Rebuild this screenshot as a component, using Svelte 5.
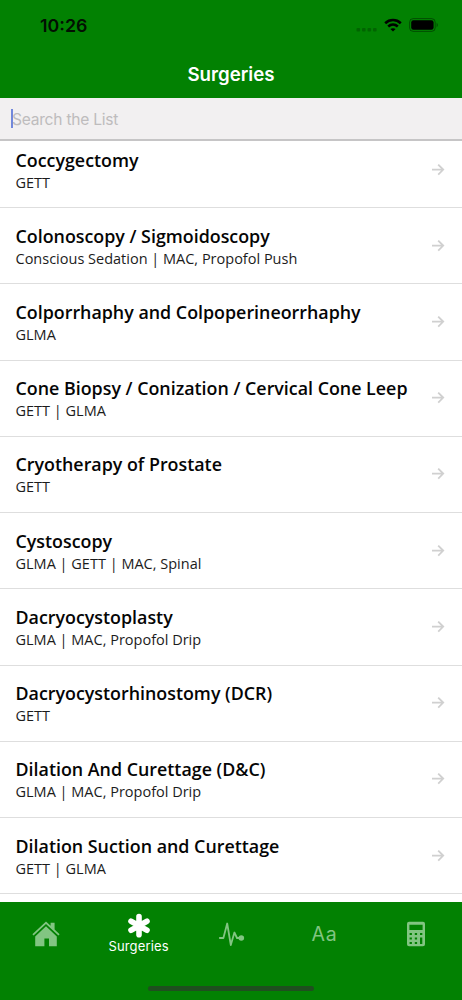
<script lang="ts">
  interface Surgery {
    name: string;
    anesthesia: string;
  }

  let surgeries: Surgery[] = [
    { name: 'Coccygectomy', anesthesia: 'GETT' },
    { name: 'Colonoscopy / Sigmoidoscopy', anesthesia: 'Conscious Sedation | MAC, Propofol Push' },
    { name: 'Colporrhaphy and Colpoperineorrhaphy', anesthesia: 'GLMA' },
    { name: 'Cone Biopsy / Conization / Cervical Cone Leep', anesthesia: 'GETT | GLMA' },
    { name: 'Cryotherapy of Prostate', anesthesia: 'GETT' },
    { name: 'Cystoscopy', anesthesia: 'GLMA | GETT | MAC, Spinal' },
    { name: 'Dacryocystoplasty', anesthesia: 'GLMA | MAC, Propofol Drip' },
    { name: 'Dacryocystorhinostomy (DCR)', anesthesia: 'GETT' },
    { name: 'Dilation And Curettage (D&C)', anesthesia: 'GLMA | MAC, Propofol Drip' },
    { name: 'Dilation Suction and Curettage', anesthesia: 'GETT | GLMA' }
  ];
</script>

<div class="screen">
  <header>
    <div class="status-bar">
      <span class="time">10:26</span>
      <div class="status-icons">
        <svg class="signal" width="22" height="4" viewBox="0 0 22 4">
          <rect x="0.5" y="0" width="3.6" height="3.4" rx="1" />
          <rect x="6" y="0" width="3.6" height="3.4" rx="1" />
          <rect x="11.5" y="0" width="3.6" height="3.4" rx="1" />
          <rect x="17" y="0" width="3.6" height="3.4" rx="1" />
        </svg>
        <svg class="wifi" width="18" height="14" viewBox="0 0 18 14">
          <path d="M1.2 5.2C5.7 1 12.3 1 16.8 5.2" />
          <path d="M4.2 8.5C7 6 11 6 13.8 8.5" />
          <path class="fill" d="M9 13.6L6.4 11.1C7.9 9.8 10.1 9.8 11.6 11.1Z" />
        </svg>
        <svg class="battery" width="30" height="14" viewBox="0 0 30 14">
          <rect class="shell" x="0.6" y="0.6" width="25.6" height="12.8" rx="3.6" />
          <rect x="2.2" y="2.2" width="22.4" height="9.6" rx="2.2" />
          <path class="tip" d="M27.6 4.8C29.3 5.5 29.3 8.5 27.6 9.2Z" />
        </svg>
      </div>
    </div>
    <h1>Surgeries</h1>
  </header>

  <div class="search">
    <span class="caret"></span>
    <span class="placeholder">Search the List</span>
  </div>

  <main>
    <ul>
      {#each surgeries as surgery}
        <li>
          <div class="info">
            <div class="name">{surgery.name}</div>
            <div class="anesthesia">{surgery.anesthesia}</div>
          </div>
          <svg class="arrow" width="14" height="12" viewBox="0 0 14 12">
            <path d="M1 5.6H12.2M7.2 0.6L12.2 5.6L7.2 10.6" />
          </svg>
        </li>
      {/each}
    </ul>
  </main>

  <nav>
    <button class="tab" aria-label="Home">
      <svg width="28" height="26" viewBox="0 0 28 26">
        <path d="M14 5.2L24.8 15.4V25.2H17V17.4H12.4V25.2H3.2V15.4Z" />
        <path d="M0.4 13.2L14 0.6L18.6 4.8V1.8H22.6V8.4L27.6 13.2L26.4 14.4L14 2.9L1.6 14.4Z" />
      </svg>
    </button>
    <button class="tab active">
      <svg width="24" height="26" viewBox="0 0 24 26">
        <path class="asterisk" d="M12 3.6V21.8M4 8.2L20 17.2M20 8.2L4 17.2" />
      </svg>
      <span>Surgeries</span>
    </button>
    <button class="tab" aria-label="Vitals">
      <svg width="28" height="26" viewBox="0 0 28 26">
        <path class="pulse" d="M2.8 17H6.4L10.2 2.5L13.8 24L17.4 11.5L20 17H24.5" />
        <circle cx="24.3" cy="17" r="2.8" />
      </svg>
    </button>
    <button class="tab letters">Aa</button>
    <button class="tab" aria-label="Calculator">
      <svg width="20" height="26" viewBox="0 0 20 26">
        <path
          fill-rule="evenodd"
          d="M3 .8H17Q19 .8 19 2.8V23.2Q19 25.2 17 25.2H3Q1 25.2 1 23.2V2.8Q1 .8 3 .8ZM3.4 3.7V9H16.6V3.7ZM3.6 11.9V14.1H5.9V11.9ZM8.8 11.9V14.1H11.1V11.9ZM14 11.9V14.1H16.3V11.9ZM3.6 16.4V18.6H5.9V16.4ZM8.8 16.4V18.6H11.1V16.4ZM3.6 20.9V23.1H5.9V20.9ZM8.8 20.9V23.1H11.1V20.9ZM14 16.4V23.1H16.3V16.4Z"
        />
      </svg>
    </button>
    <div class="home-indicator"></div>
  </nav>
</div>

<style>
  :global(body) {
    margin: 0;
    background: #fff;
  }

  .screen {
    display: flex;
    flex-direction: column;
    width: 462px;
    height: 1000px;
    overflow: hidden;
    background: #fff;
    font-family: Inter, 'Liberation Sans', sans-serif;
  }

  header {
    height: 98px;
    flex-shrink: 0;
    background: #028102;
  }

  .status-bar {
    display: flex;
    justify-content: space-between;
    align-items: center;
    height: 50px;
    padding: 0 23px 0 40px;
  }

  .time {
    font-size: 17.8px;
    font-weight: 600;
    color: #021002;
  }

  .status-icons {
    display: flex;
    align-items: center;
  }

  .signal {
    margin: 9px 6px 0 0;
    opacity: 0.22;
  }

  .wifi {
    margin-right: 7px;
    fill: none;
    stroke: #000;
    stroke-width: 2.6;
  }

  .wifi .fill {
    fill: #000;
    stroke: none;
  }

  .shell {
    fill: none;
    stroke: #000;
    stroke-opacity: 0.4;
  }

  .tip {
    opacity: 0.4;
  }

  h1 {
    margin: 0;
    font-size: 18.7px;
    line-height: 49px;
    font-weight: 600;
    text-align: center;
    color: #fff;
  }

  .search {
    display: flex;
    align-items: center;
    box-sizing: border-box;
    height: 43px;
    flex-shrink: 0;
    padding-left: 11px;
    background: #f2f0f1;
    border-bottom: 2px solid #c6c5c6;
  }

  .caret {
    width: 2px;
    height: 19px;
    margin-right: -1px;
    background: #7288dc;
  }

  .placeholder {
    font-size: 15.6px;
    letter-spacing: -0.25px;
    padding-top: 1px;
    color: #bebcbd;
  }

  main {
    flex: 1;
    min-height: 0;
    overflow: hidden;
  }

  ul {
    margin: -9px 0 0;
    padding: 0;
    list-style: none;
    font-family: 'Open Sans', sans-serif;
  }

  li {
    display: flex;
    align-items: center;
    justify-content: space-between;
    box-sizing: border-box;
    height: 76.23px;
    padding: 0 17px 0 15.5px;
    border-bottom: 1px solid #dedede;
  }

  .name {
    font-size: 17.85px;
    line-height: 24px;
    font-weight: 600;
    color: #050505;
    white-space: nowrap;
  }

  .anesthesia {
    margin-bottom: -2px;
    font-size: 14.5px;
    line-height: 22px;
    color: #1c1c1c;
    white-space: nowrap;
  }

  .arrow {
    fill: none;
    stroke: #d0d0d0;
    stroke-width: 1.8;
  }

  nav {
    position: relative;
    display: grid;
    grid-template-columns: repeat(5, 1fr);
    align-items: start;
    height: 98px;
    flex-shrink: 0;
    background: #028102;
  }

  .tab {
    display: flex;
    flex-direction: column;
    align-items: center;
    justify-content: center;
    height: 64px;
    padding: 0;
    border: none;
    background: none;
    font-family: inherit;
    color: #82c582;
  }

  .tab svg {
    fill: currentColor;
  }

  .tab.active {
    height: 62px;
    color: #fff;
  }

  .tab span {
    font-size: 13px;
    line-height: 16px;
    letter-spacing: 0.15px;
    margin-top: -1px;
  }

  .asterisk {
    stroke: currentColor;
    stroke-width: 5.6;
    stroke-linecap: round;
  }

  .pulse {
    fill: none;
    stroke: currentColor;
    stroke-width: 1.8;
    stroke-linecap: round;
    stroke-linejoin: round;
  }

  .letters {
    padding-left: 2px;
    font-size: 19.5px;
    letter-spacing: 0.6px;
  }

  .home-indicator {
    position: absolute;
    left: 148px;
    bottom: 9px;
    width: 166px;
    height: 5px;
    border-radius: 3px;
    background: #1f4f1f;
  }
</style>
